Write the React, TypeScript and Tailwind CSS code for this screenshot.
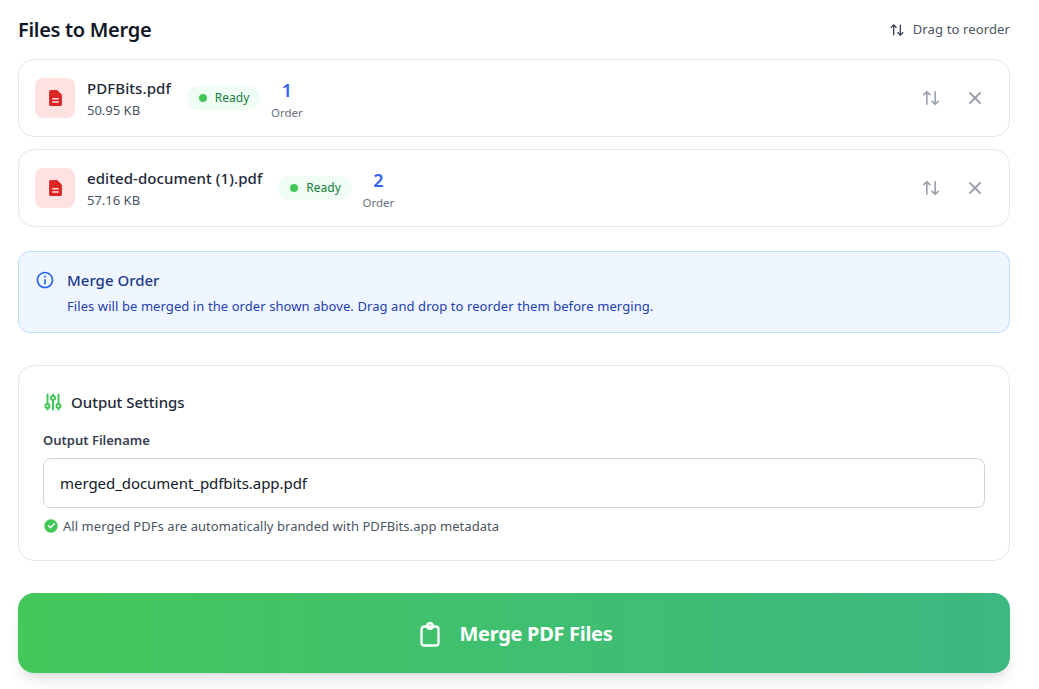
import {
  RiArrowUpDownLine,
  RiCheckboxCircleFill,
  RiCloseLine,
  RiInformationLine,
} from 'react-icons/ri';

const files = [
  { name: 'PDFBits.pdf', size: '50.95 KB', order: 1 },
  { name: 'edited-document (1).pdf', size: '57.16 KB', order: 2 },
];

function FileIcon() {
  return (
    <svg viewBox="0 0 16 20" className="h-[16px] w-[13px] text-[#dc2626]" fill="currentColor">
      <path fillRule="evenodd" d="M2 0h8l6 6v12a2 2 0 0 1-2 2H2a2 2 0 0 1-2-2V2a2 2 0 0 1 2-2Zm2 10v2h8v-2H4Zm0 4v2h8v-2H4Z" />
    </svg>
  );
}

function SlidersIcon() {
  return (
    <svg viewBox="0 0 18 18" className="h-[18px] w-[18px] text-[#44c75a]" fill="none" stroke="currentColor" strokeWidth="2" strokeLinecap="round">
      <path d="M3.5 1.5v9M3.5 15.5v1M9 1.5v1M9 7.5v9M14.5 1.5v9M14.5 15.5v1" />
      <circle cx="3.5" cy="13" r="2" />
      <circle cx="9" cy="5" r="2" />
      <circle cx="14.5" cy="13" r="2" />
    </svg>
  );
}

function ClipboardIcon() {
  return (
    <svg viewBox="0 0 20 25" className="h-[25px] w-5" fill="none" stroke="currentColor" strokeWidth="2.3" strokeLinejoin="round">
      <rect x="1.5" y="4.5" width="17" height="19" rx="2.8" />
      <circle cx="10" cy="4" r="2.8" />
    </svg>
  );
}

// One row of the file list
function FileRow({ name, size, order }: { name: string; size: string; order: number }) {
  return (
    <div className="flex h-[78px] items-center justify-between rounded-2xl border border-[#e5e7eb] bg-white pl-4 pr-[22px]">
      <div className="flex items-center">
        <div className="flex h-10 w-10 items-center justify-center rounded-lg bg-[#fee2e2]">
          <FileIcon />
        </div>
        <div className="ml-3 mr-4">
          <div className="text-[15px] leading-[22px] font-medium tracking-[0.08px] text-[#1f2937]">{name}</div>
          <div className="pt-px text-[13px] leading-5 text-[#4b5563]">{size}</div>
        </div>
        <div className="flex h-6 items-center gap-2 rounded-full bg-[#f0fdf4] pl-3 pr-[11px] text-xs font-normal text-[#15803d]">
          <span className="h-2 w-2 rounded-full bg-[#44c75a]" />
          Ready
        </div>
        <div className="ml-[11px] flex w-[31px] flex-col items-center">
          <div className="text-lg leading-7 font-semibold text-[#3563f0]">{order}</div>
          <div className="pt-px text-[11.5px] leading-4 text-[#6b7280]">Order</div>
        </div>
      </div>
      <div className="flex items-center gap-[22px]">
        <RiArrowUpDownLine className="h-5 w-5 text-[#9ca3af]" />
        <RiCloseLine className="h-6 w-6 text-[#9ca3af]" />
      </div>
    </div>
  );
}

export default function App() {
  return (
    <div className="h-[689px] w-[1039px] overflow-hidden bg-white pl-[18px] pr-[29px] font-['Noto_Sans',sans-serif]">
      <div className="flex h-[59px] items-center justify-between">
        <h2 className="text-xl font-semibold tracking-[-0.3px] text-[#111827]">Files to Merge</h2>
        <div className="flex items-center gap-2 text-[13px] tracking-[0.13px] text-[#4b5563]">
          <RiArrowUpDownLine className="h-4 w-4 text-[#374151]" />
          Drag to reorder
        </div>
      </div>

      <div className="flex flex-col gap-3">
        {files.map((file) => (
          <FileRow key={file.order} {...file} />
        ))}
      </div>

      <div className="mt-6 flex h-[82px] gap-3 rounded-xl border border-[#bfdbfe] bg-[#eff6ff] pl-4 pt-[17px]">
        <RiInformationLine className="mt-px h-5 w-5 text-[#2563eb]" />
        <div>
          <div className="-mt-px text-[15px] leading-6 font-medium text-[#1e3a8a]">Merge Order</div>
          <div className="mt-1 text-[13px] leading-5 tracking-[0.08px] text-[#1e40af]">
            Files will be merged in the order shown above. Drag and drop to reorder them before merging.
          </div>
        </div>
      </div>

      <div className="mt-8 h-[196px] rounded-2xl border border-[#e5e7eb] bg-white px-6 pt-6">
        <div className="flex items-center gap-[9px] pl-px text-[15px] leading-6 font-medium text-[#1f2937]">
          <SlidersIcon />
          Output Settings
        </div>
        <div className="mt-4 text-[13px] leading-5 font-semibold text-[#374151]">Output Filename</div>
        <input
          readOnly
          value="merged_document_pdfbits.app.pdf"
          className="mt-2 h-[50px] w-full rounded-lg border border-[#d1d5db] px-4 text-[15px] tracking-[-0.05px] text-[#111827] outline-none"
        />
        <div className="mt-2 flex items-center gap-1 text-[13px] leading-5 tracking-[0.05px] text-[#4b5563]">
          <RiCheckboxCircleFill className="h-4 w-4 text-[#44c75a]" />
          All merged PDFs are automatically branded with PDFBits.app metadata
        </div>
      </div>

      <button className="mt-8 flex h-20 w-full items-center justify-center gap-5 rounded-2xl bg-gradient-to-r from-[#44c75a] to-[#3cb881] pl-1 pt-0.5 text-xl font-bold tracking-[-0.3px] text-white shadow-lg">
        <ClipboardIcon />
        Merge PDF Files
      </button>
    </div>
  );
}
